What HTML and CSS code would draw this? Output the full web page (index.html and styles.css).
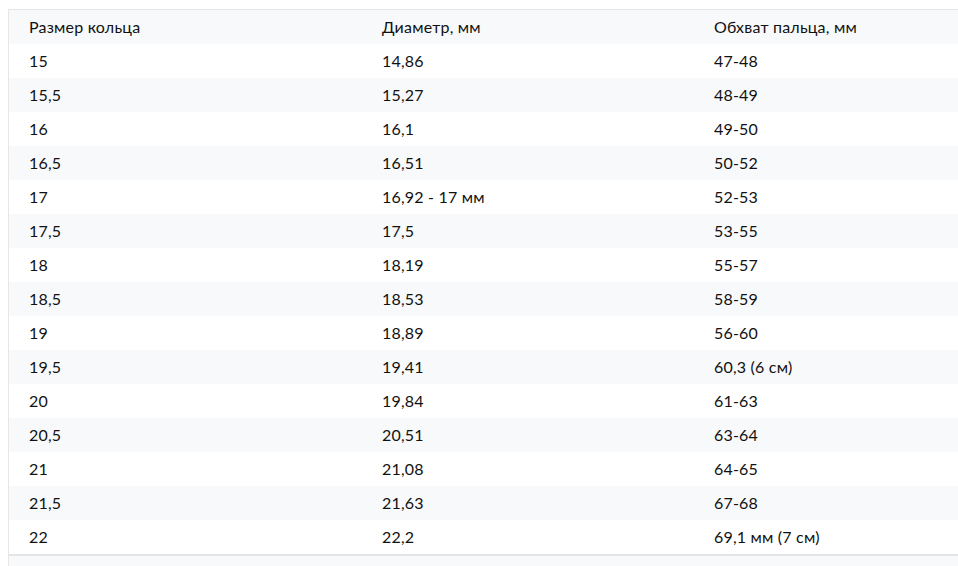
FILE: index.html
```html
<!DOCTYPE html>
<html lang="ru">
<head>
<meta charset="utf-8">
<title>Таблица размеров колец</title>
<link rel="stylesheet" href="styles.css">
</head>
<body>
<div class="table">
  <div class="row head"><div class="c1">Размер кольца</div><div class="c2">Диаметр, мм</div><div class="c3">Обхват пальца, мм</div></div>
  <div class="row"><div class="c1">15</div><div class="c2">14,86</div><div class="c3">47-48</div></div>
  <div class="row"><div class="c1">15,5</div><div class="c2">15,27</div><div class="c3">48-49</div></div>
  <div class="row"><div class="c1">16</div><div class="c2">16,1</div><div class="c3">49-50</div></div>
  <div class="row"><div class="c1">16,5</div><div class="c2">16,51</div><div class="c3">50-52</div></div>
  <div class="row"><div class="c1">17</div><div class="c2">16,92 - 17 мм</div><div class="c3">52-53</div></div>
  <div class="row"><div class="c1">17,5</div><div class="c2">17,5</div><div class="c3">53-55</div></div>
  <div class="row"><div class="c1">18</div><div class="c2">18,19</div><div class="c3">55-57</div></div>
  <div class="row"><div class="c1">18,5</div><div class="c2">18,53</div><div class="c3">58-59</div></div>
  <div class="row"><div class="c1">19</div><div class="c2">18,89</div><div class="c3">56-60</div></div>
  <div class="row"><div class="c1">19,5</div><div class="c2">19,41</div><div class="c3">60,3 (6 см)</div></div>
  <div class="row"><div class="c1">20</div><div class="c2">19,84</div><div class="c3">61-63</div></div>
  <div class="row"><div class="c1">20,5</div><div class="c2">20,51</div><div class="c3">63-64</div></div>
  <div class="row"><div class="c1">21</div><div class="c2">21,08</div><div class="c3">64-65</div></div>
  <div class="row"><div class="c1">21,5</div><div class="c2">21,63</div><div class="c3">67-68</div></div>
  <div class="row last"><div class="c1">22</div><div class="c2">22,2</div><div class="c3">69,1 мм (7 см)</div></div>
  <div class="row foot"></div>
</div>
</body>
</html>
```
FILE: styles.css
```css
html, body {
  margin: 0;
  padding: 0;
  background: #ffffff;
  height: 566px;
  overflow: hidden;
}
body {
  padding: 9px 0 0 8px;
  box-sizing: border-box;
  font-family: "Lato", "Noto Sans", sans-serif;
  font-size: 16px;
  letter-spacing: 0.2px;
  color: #111111;
}
.table {
  border-left: 1px solid #e6e6e6;
  border-top: 1px solid #e6e6e6;
  display: flex;
  flex-direction: column;
}
.row {
  display: grid;
  grid-template-columns: 353px 332px 1fr;
  height: 34px;
  align-items: center;
}
.row > div {
  padding-left: 20px;
  padding-bottom: 2px;
}
.row:nth-child(odd) {
  background: #f8f9fa;
}
.row.last {
  border-bottom: 2px solid #e3e4e5;
}
.row.foot {
  background: #f8f9fa;
}
```
